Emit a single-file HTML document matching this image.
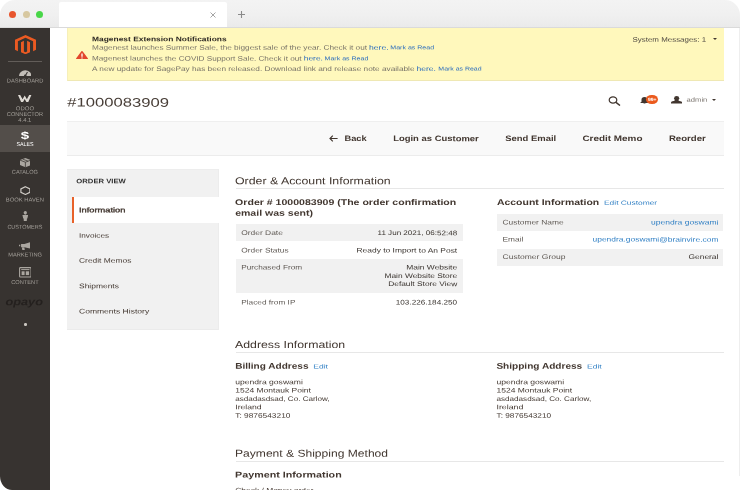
<!DOCTYPE html>
<html lang="en">
<head>
<meta charset="utf-8">
<title>#1000083909 / Orders / Magento Admin</title>
<style>
*{box-sizing:border-box;margin:0;padding:0}
html,body{width:740px;height:490px;overflow:hidden;background:#fff}
body{font-family:"Liberation Sans",sans-serif;color:#41362f;font-size:7px;position:relative}
#win{position:absolute;left:0;top:0;width:740px;height:490px;border-radius:15px 15px 0 0;border-bottom-left-radius:12px 14px;overflow:hidden;background:#fff}
.a{position:absolute;left:0;top:0;white-space:nowrap;line-height:1;transform-origin:0 0}
#tx{position:absolute;left:0;top:0;width:740px;height:490px;will-change:transform}
.b{position:absolute}
#chrome{position:absolute;left:0;top:0;width:740px;height:28px;background:linear-gradient(#f3f3f3 0,#f0f0f0 55%,#eaeaea 100%);border-bottom:1px solid #dadada}
#tab{position:absolute;left:59px;top:2px;width:168px;height:25px;background:#fff;border-radius:2px 2px 0 0}
.dot{position:absolute;top:11px;width:7.200px;height:7.200px;border-radius:50%}
#side{position:absolute;left:0;top:28px;width:50px;height:462px;background:#373330}
#note{position:absolute;left:67px;top:28px;width:657.200px;height:53px;background:#fff8bc;border-bottom:1px solid #efe8b4;border-left:1px solid #f6efb9}
#bar{position:absolute;left:67px;top:121px;width:657px;height:34.500px;background:#f9f9f9;border-top:1px solid #efefef;border-bottom:1px solid #ececec}
#nav{position:absolute;left:67px;top:168.800px;width:151.800px;height:160.800px;background:#f1f1f1;box-shadow:inset -1px 0 0 #ececec,inset 0 1px 0 #ededed,inset 0 -1px 0 #ebebeb}
#nav .hd{position:absolute;left:0;top:1px;width:150.800px;height:24px;background:#f1f1f1}
#nav .act{position:absolute;left:5px;top:28.500px;right:0;height:25.300px;background:#fff}
#nav .bar{position:absolute;left:4.600px;top:28.500px;width:2.100px;height:25.300px;background:#e8622a}
.hr{position:absolute;height:1px;background:#e7e7e7;left:235.700px;width:488.500px}
.row{position:absolute;background:#f1f1f1}
</style>
</head>
<body>
<div id="win">
  <div id="chrome">
    <div class="dot" style="left:9.200px;background:#e8552e"></div>
    <div class="dot" style="left:22.600px;background:#d7c8a1"></div>
    <div class="dot" style="left:35.900px;background:#48d648"></div>
    <div id="tab"></div>
    <svg class="b" style="left:210px;top:12px" width="6" height="6" viewBox="0 0 6 6"><path d="M.5.5l5 5M5.500.5l-5 5" stroke="#9a9a9a" stroke-width=".9" fill="none"/></svg>
    <svg class="b" style="left:238px;top:11px" width="7" height="7" viewBox="0 0 7 7"><path d="M3.500 0v7M0 3.500h7" stroke="#8a8a8a" stroke-width="1.100" fill="none"/></svg>
  </div>

  <div id="side">
    <!-- magento logo -->
    <svg class="b" style="left:15px;top:6.700px" width="21" height="19.300" viewBox="0 0 21 18.500" preserveAspectRatio="none"><path d="M10.500 0L0 4.500v9.700l2.900 1.300V6L10.500 2.700 18.100 6v9.500l2.900-1.300V4.500z" fill="#eb5a22"/><path d="M12.100 5.600v10.200l-1.600.8-1.600-.8V5.600L6 6.900v9.600l4.500 2 4.500-2V6.900z" fill="#eb5a22"/></svg>
    <div class="b" style="left:8px;top:33px;width:34px;height:1px;background:#625d59"></div>
    <!-- dashboard -->
    <svg class="b" style="left:18.700px;top:40.700px" width="12.500" height="7.200" viewBox="0 0 13 8" preserveAspectRatio="none"><path d="M0 8a6.500 6.500 0 0 1 13 0z" fill="#c2beb8"/><path d="M6.500 7.800l2.300-4.500" stroke="#373330" stroke-width="1.100"/><circle cx="6.500" cy="7.500" r="1.300" fill="#373330"/></svg>
    <!-- odoo -->
    <svg class="b" style="left:18.400px;top:66.700px" width="13.400" height="7.500" viewBox="0 0 13.400 7.500"><path d="M0 0h2.200l2.300 4.300L6.700.4l2.200 3.900L11.200 0h2.200l-3.300 7.500H8.600L6.700 3.900 4.800 7.500H3.300z" fill="#dedad4"/></svg>
    <!-- sales active -->
    <div class="b" style="left:0;top:96.900px;width:50px;height:27.600px;background:#534e4a"></div>
    <!-- catalog -->
    <svg class="b" style="left:19.700px;top:130.400px" width="10.800" height="9.200" viewBox="0 0 11 10" preserveAspectRatio="none"><path d="M5.500 0L11 2.300v5.400L5.500 10 0 7.700V2.300z" fill="#aaa6a0"/><path d="M0 2.300L5.500 4.600 11 2.300M5.500 4.600V10M2.700 1.200l5.500 2.300" stroke="#373330" stroke-width=".8" fill="none"/></svg>
    <!-- book haven -->
    <svg class="b" style="left:19.700px;top:157.800px" width="10.800" height="9.200" viewBox="0 0 12 10" preserveAspectRatio="none"><path d="M6 .8l5 2.300v3.800L6 9.200 1 6.900V3.100z" fill="none" stroke="#cfcbc5" stroke-width="1.300"/></svg>
    <!-- customers -->
    <svg class="b" style="left:21.800px;top:183.400px" width="6.600" height="10" viewBox="0 0 8 11" preserveAspectRatio="none"><circle cx="4" cy="2" r="2" fill="#aaa6a0"/><path d="M0.500 4.500h7l-1 3.800H6L5.800 11h-3.600L2 8.300H1.500z" fill="#aaa6a0"/></svg>
    <!-- marketing -->
    <svg class="b" style="left:18.900px;top:213.900px" width="11.600" height="7.900" viewBox="0 0 14 10" preserveAspectRatio="none"><path d="M14 0v8.500L6.500 6.500H2.500V2.500h4zM0 3.500h1.500v2H0zM3.500 7h3L7 10H4z" fill="#aaa6a0"/></svg>
    <!-- content -->
    <svg class="b" style="left:18.700px;top:239.300px" width="12.700" height="10.600" viewBox="0 0 12.700 10.600"><rect x=".6" y=".6" width="11.500" height="9.400" rx=".8" fill="none" stroke="#aaa6a0" stroke-width="1.100"/><path d="M2.200 2.600h8.300" stroke="#aaa6a0" stroke-width="1"/><rect x="2.600" y="4.300" width="3" height="3.800" fill="#aaa6a0"/><rect x="6.800" y="4.300" width="3.300" height="3.800" fill="#aaa6a0"/></svg>
    <div class="b" style="left:24px;top:295.300px;width:2.600px;height:2.600px;border-radius:50%;background:#c9c5bf"></div>
  </div>

  <div id="note">
    <svg class="b" style="left:7.500px;top:22.900px" width="12" height="8.600" viewBox="0 0 12 8.600"><path d="M6 .8l5.200 7H.8z" fill="#e2472c" stroke="#e2472c" stroke-width="1.500" stroke-linejoin="round"/><path d="M6 2.600v3.200M6 6.500v1.100" stroke="#fff" stroke-width="1.300"/></svg>
    <div class="b" style="left:645.300px;top:10px;border:2.300px solid transparent;border-top:2.800px solid #41362f;border-bottom:0"></div>
  </div>

  <!-- header icons -->
  <svg class="b" style="left:608px;top:95.500px" width="13" height="10" viewBox="0 0 13 10"><ellipse cx="5" cy="4" rx="3.800" ry="3.200" fill="none" stroke="#41362f" stroke-width="1.200"/><path d="M8 6.400l4 3.100" stroke="#41362f" stroke-width="1.500"/></svg>
  <svg class="b" style="left:640px;top:96.700px" width="9" height="7.600" viewBox="0 0 9 9" preserveAspectRatio="none"><path d="M4.500 0a3 3 0 0 1 3 3v2.500L9 7H0l1.500-1.500V3a3 3 0 0 1 3-3zM3.300 7.800h2.400L4.500 9z" fill="#41362f"/></svg>
  <div class="b" style="left:646.400px;top:94.500px;width:11.300px;height:9.300px;border-radius:50%;background:#eb5a1d"></div>
  <svg class="b" style="left:670.500px;top:96px" width="11.300" height="7.600" viewBox="0 0 11 10" preserveAspectRatio="none"><ellipse cx="5.500" cy="3" rx="2.500" ry="3" fill="#41362f"/><path d="M0 10V8.600c0-1.400 2.400-1.600 3.700-2.600V5h3.600v1c1.300 1 3.700 1.200 3.700 2.600V10z" fill="#41362f"/></svg>
  <div class="b" style="left:712px;top:99px;border:2.200px solid transparent;border-top:2.600px solid #41362f;border-bottom:0"></div>

  <div class="b" style="left:739px;top:28px;width:1px;height:448px;background:#eeeeee"></div>
  <div id="bar">
    <svg class="b" style="left:261.500px;top:13.300px" width="9" height="7" viewBox="0 0 9 7"><path d="M8.600 3.500H1.200M3.800.7L1 3.500l2.800 2.800" fill="none" stroke="#41362f" stroke-width="1.150"/></svg>
  </div>

  <div id="nav"><div class="hd"></div><div class="act"></div><div class="bar"></div></div>

  <div class="hr" style="top:188.300px"></div>
  <div class="row" style="left:236px;top:224px;width:226.500px;height:17.300px"></div>
  <div class="row" style="left:236px;top:259px;width:226.500px;height:33.500px"></div>
  <div class="row" style="left:497px;top:214px;width:226.300px;height:16.500px"></div>
  <div class="row" style="left:497px;top:249px;width:226.300px;height:16.500px"></div>
  <div class="hr" style="top:352px"></div>
  <div class="hr" style="top:461.300px"></div>

<div id="tx">
<div class="a" style="font-size:6.7px;color:#2b2622;transform:translate(92px,36.3px) scaleX(1.258) rotate(.03deg);font-weight:bold;">Magenest Extension Notifications</div>
<div class="a" style="font-size:6.7px;color:#777267;transform:translate(92.01px,44.7px) scaleX(1.233) rotate(.03deg);">Magenest launches Summer Sale, the biggest sale of the year. Check it out</div>
<div class="a" style="font-size:6.7px;color:#2a6cbd;transform:translate(369.01px,44.7px) scaleX(1.289) rotate(.03deg);">here.</div>
<div class="a" style="font-size:5.4px;color:#2a6cbd;transform:translate(390.33px,45.3px) scaleX(1.304) rotate(.03deg);">Mark as Read</div>
<div class="a" style="font-size:6.7px;color:#777267;transform:translate(92.01px,55.6px) scaleX(1.220) rotate(.03deg);">Magenest launches the COVID Support Sale. Check it out</div>
<div class="a" style="font-size:6.7px;color:#2a6cbd;transform:translate(303.77px,55.6px) scaleX(1.255) rotate(.03deg);">here.</div>
<div class="a" style="font-size:5.4px;color:#2a6cbd;transform:translate(324.58px,56.2px) scaleX(1.304) rotate(.03deg);">Mark as Read</div>
<div class="a" style="font-size:6.7px;color:#777267;transform:translate(92.01px,65.9px) scaleX(1.234) rotate(.03deg);">A new update for SagePay has been released. Download link and release note available</div>
<div class="a" style="font-size:6.7px;color:#2a6cbd;transform:translate(416.51px,65.9px) scaleX(1.272) rotate(.03deg);">here.</div>
<div class="a" style="font-size:5.4px;color:#2a6cbd;transform:translate(438.34px,66.5px) scaleX(1.289) rotate(.03deg);">Mark as Read</div>
<div class="a" style="font-size:6.7px;color:#4a443e;transform:translate(632.53px,36.7px) scaleX(1.186) rotate(.03deg);">System Messages: 1</div>
<div class="a" style="font-size:12.5px;color:#483e37;transform:translate(67.32px,96.6px) scaleX(1.330) rotate(.03deg);">#1000083909</div>
<div class="a" style="font-size:6.2px;color:#7a746e;transform:translate(686.56px,96.7px) scaleX(1.234) rotate(.03deg);">admin</div>
<div class="a" style="font-size:7.9px;color:#41362f;transform:translate(344.47px,135.1px) scaleX(1.178) rotate(.03deg);font-weight:bold;">Back</div>
<div class="a" style="font-size:7.9px;color:#41362f;transform:translate(393.19px,135.1px) scaleX(1.197) rotate(.03deg);font-weight:bold;">Login as Customer</div>
<div class="a" style="font-size:7.9px;color:#41362f;transform:translate(505.19px,135.1px) scaleX(1.199) rotate(.03deg);font-weight:bold;">Send Email</div>
<div class="a" style="font-size:7.9px;color:#41362f;transform:translate(582.41px,135.1px) scaleX(1.257) rotate(.03deg);font-weight:bold;">Credit Memo</div>
<div class="a" style="font-size:7.9px;color:#41362f;transform:translate(668.94px,135.1px) scaleX(1.217) rotate(.03deg);font-weight:bold;">Reorder</div>
<div class="a" style="font-size:6.4px;color:#303030;transform:translate(76.3px,178.3px) scaleX(1.204) rotate(.03deg);font-weight:bold;">ORDER VIEW</div>
<div class="a" style="font-size:6.71px;color:#41362f;transform:translate(78.95px,207.3px) scaleX(1.386) rotate(.03deg);-webkit-text-stroke:.32px #41362f;">Information</div>
<div class="a" style="font-size:6.7px;color:#41362f;transform:translate(79.02px,232.7px) scaleX(1.227) rotate(.03deg);">Invoices</div>
<div class="a" style="font-size:6.7px;color:#41362f;transform:translate(79px,257.7px) scaleX(1.259) rotate(.03deg);">Credit Memos</div>
<div class="a" style="font-size:6.7px;color:#41362f;transform:translate(79px,283.2px) scaleX(1.263) rotate(.03deg);">Shipments</div>
<div class="a" style="font-size:6.7px;color:#41362f;transform:translate(78.99px,308.4px) scaleX(1.276) rotate(.03deg);">Comments History</div>
<div class="a" style="font-size:10.1px;color:#41362f;transform:translate(235.02px,176.25px) scaleX(1.222) rotate(.03deg);">Order &amp; Account Information</div>
<div class="a" style="font-size:8.3px;color:#41362f;transform:translate(235.12px,198px) scaleX(1.272) rotate(.03deg);font-weight:bold;">Order # 1000083909 (The order confirmation</div>
<div class="a" style="font-size:8.3px;color:#41362f;transform:translate(235.13px,208.75px) scaleX(1.270) rotate(.03deg);font-weight:bold;">email was sent)</div>
<div class="a" style="font-size:6.7px;color:#5e5853;transform:translate(241.25px,230.1px) scaleX(1.259) rotate(.03deg);">Order Date</div>
<div class="a" style="font-size:6.7px;color:#37312c;transform:translate(377.52px,230.1px) scaleX(1.205) rotate(.03deg);">11 Jun 2021, 06:52:48</div>
<div class="a" style="font-size:6.7px;color:#5e5853;transform:translate(241.26px,247.6px) scaleX(1.250) rotate(.03deg);">Order Status</div>
<div class="a" style="font-size:6.7px;color:#37312c;transform:translate(356.5px,247.6px) scaleX(1.260) rotate(.03deg);">Ready to Import to An Post</div>
<div class="a" style="font-size:6.7px;color:#5e5853;transform:translate(241.26px,264.6px) scaleX(1.232) rotate(.03deg);">Purchased From</div>
<div class="a" style="font-size:6.7px;color:#37312c;transform:translate(406.25px,264.6px) scaleX(1.260) rotate(.03deg);">Main Website</div>
<div class="a" style="font-size:6.7px;color:#37312c;transform:translate(384.5px,272.9px) scaleX(1.248) rotate(.03deg);">Main Website Store</div>
<div class="a" style="font-size:6.7px;color:#37312c;transform:translate(388.26px,281.1px) scaleX(1.247) rotate(.03deg);">Default Store View</div>
<div class="a" style="font-size:6.7px;color:#5e5853;transform:translate(241.26px,299.6px) scaleX(1.235) rotate(.03deg);">Placed from IP</div>
<div class="a" style="font-size:6.7px;color:#37312c;transform:translate(395.77px,299.6px) scaleX(1.222) rotate(.03deg);">103.226.184.250</div>
<div class="a" style="font-size:8.3px;color:#41362f;transform:translate(496.88px,198px) scaleX(1.262) rotate(.03deg);font-weight:bold;">Account Information</div>
<div class="a" style="font-size:6px;color:#2f7fc4;transform:translate(604.01px,199.8px) scaleX(1.398) rotate(.03deg);">Edit Customer</div>
<div class="a" style="font-size:6.7px;color:#5e5853;transform:translate(502.5px,219.6px) scaleX(1.256) rotate(.03deg);">Customer Name</div>
<div class="a" style="font-size:6.7px;color:#2f7fc4;transform:translate(650.99px,219.6px) scaleX(1.277) rotate(.03deg);">upendra goswami</div>
<div class="a" style="font-size:6.7px;color:#5e5853;transform:translate(502.52px,236.6px) scaleX(1.248) rotate(.03deg);">Email</div>
<div class="a" style="font-size:6.7px;color:#2f7fc4;transform:translate(592.5px,236.6px) scaleX(1.263) rotate(.03deg);">upendra.goswami@brainvire.com</div>
<div class="a" style="font-size:6.7px;color:#5e5853;transform:translate(502.5px,254.1px) scaleX(1.273) rotate(.03deg);">Customer Group</div>
<div class="a" style="font-size:6.7px;color:#37312c;transform:translate(688.51px,254.1px) scaleX(1.256) rotate(.03deg);">General</div>
<div class="a" style="font-size:10.1px;color:#41362f;transform:translate(235.02px,340px) scaleX(1.219) rotate(.03deg);">Address Information</div>
<div class="a" style="font-size:8.3px;color:#41362f;transform:translate(235.16px,361.7px) scaleX(1.211) rotate(.03deg);font-weight:bold;">Billing Address</div>
<div class="a" style="font-size:6px;color:#2f7fc4;transform:translate(313.27px,363.5px) scaleX(1.414) rotate(.03deg);">Edit</div>
<div class="a" style="font-size:8.3px;color:#41362f;transform:translate(496.4px,361.7px) scaleX(1.214) rotate(.03deg);font-weight:bold;">Shipping Address</div>
<div class="a" style="font-size:6px;color:#2f7fc4;transform:translate(587.02px,363.5px) scaleX(1.414) rotate(.03deg);">Edit</div>
<div class="a" style="font-size:6.7px;color:#41362f;transform:translate(235.24px,379.2px) scaleX(1.282) rotate(.03deg);">upendra goswami</div>
<div class="a" style="font-size:6.7px;color:#41362f;transform:translate(496.49px,379.2px) scaleX(1.282) rotate(.03deg);">upendra goswami</div>
<div class="a" style="font-size:6.7px;color:#41362f;transform:translate(235.24px,387.57px) scaleX(1.272) rotate(.03deg);">1524 Montauk Point</div>
<div class="a" style="font-size:6.7px;color:#41362f;transform:translate(496.49px,387.57px) scaleX(1.272) rotate(.03deg);">1524 Montauk Point</div>
<div class="a" style="font-size:6.7px;color:#41362f;transform:translate(235.27px,395.94px) scaleX(1.209) rotate(.03deg);">asdadasdsad, Co. Carlow,</div>
<div class="a" style="font-size:6.7px;color:#41362f;transform:translate(496.52px,395.94px) scaleX(1.212) rotate(.03deg);">asdadasdsad, Co. Carlow,</div>
<div class="a" style="font-size:6.7px;color:#41362f;transform:translate(235.25px,404.31px) scaleX(1.292) rotate(.03deg);">Ireland</div>
<div class="a" style="font-size:6.7px;color:#41362f;transform:translate(496.49px,404.31px) scaleX(1.317) rotate(.03deg);">Ireland</div>
<div class="a" style="font-size:6.7px;color:#41362f;transform:translate(235.26px,412.68px) scaleX(1.246) rotate(.03deg);">T: 9876543210</div>
<div class="a" style="font-size:6.7px;color:#41362f;transform:translate(496.51px,412.68px) scaleX(1.234) rotate(.03deg);">T: 9876543210</div>
<div class="a" style="font-size:10.1px;color:#41362f;transform:translate(235.03px,448.75px) scaleX(1.196) rotate(.03deg);">Payment &amp; Shipping Method</div>
<div class="a" style="font-size:8.3px;color:#41362f;transform:translate(235.11px,470.5px) scaleX(1.292) rotate(.03deg);font-weight:bold;">Payment Information</div>
<div class="a" style="font-size:6.7px;color:#41362f;transform:translate(235.25px,487.6px) scaleX(1.259) rotate(.03deg);">Check / Money order</div>
<div class="a" style="font-size:5.6px;color:#a29e98;transform:translate(6.86px,78.6px) scaleX(1.028) rotate(.03deg);">DASHBOARD</div>
<div class="a" style="font-size:5.6px;color:#a29e98;transform:translate(15.85px,106.2px) scaleX(1.073) rotate(.03deg);">ODOO</div>
<div class="a" style="font-size:5.6px;color:#a29e98;transform:translate(6.87px,112px) scaleX(1.004) rotate(.03deg);">CONNECTOR</div>
<div class="a" style="font-size:5.6px;color:#a29e98;transform:translate(18.37px,117.7px) scaleX(1.045) rotate(.03deg);">4.4.1</div>
<div class="a" style="font-size:10.5px;color:#ffffff;transform:translate(20.85px,130px) scaleX(1.435) rotate(.03deg);font-weight:bold;">$</div>
<div class="a" style="font-size:5.6px;color:#ffffff;transform:translate(16.49px,142px) scaleX(0.951) rotate(.03deg);">SALES</div>
<div class="a" style="font-size:5.6px;color:#a29e98;transform:translate(11.87px,169.8px) scaleX(1.004) rotate(.03deg);">CATALOG</div>
<div class="a" style="font-size:5.6px;color:#a29e98;transform:translate(5.86px,197.4px) scaleX(1.040) rotate(.03deg);">BOOK HAVEN</div>
<div class="a" style="font-size:5.6px;color:#a29e98;transform:translate(7.38px,224.8px) scaleX(0.982) rotate(.03deg);">CUSTOMERS</div>
<div class="a" style="font-size:5.6px;color:#a29e98;transform:translate(8.16px,252.4px) scaleX(1.017) rotate(.03deg);">MARKETING</div>
<div class="a" style="font-size:5.6px;color:#a29e98;transform:translate(11.17px,280.1px) scaleX(1.017) rotate(.03deg);">CONTENT</div>
<div class="a" style="font-size:10.5px;color:#24201e;transform:translate(5.46px,296.3px) scaleX(1.211) rotate(.03deg);font-weight:bold;font-style:italic;">opayo</div>
<div class="a" style="font-size:4.6px;color:#ffffff;transform:translate(648.02px,98px) scaleX(1.093) rotate(.03deg);font-weight:bold;">99+</div>
</div>
</div>
</body>
</html>
